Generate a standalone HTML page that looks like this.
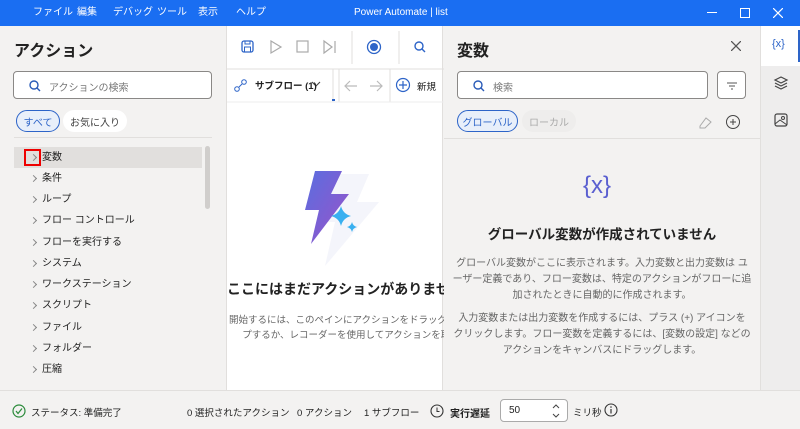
<!DOCTYPE html>
<html><head><meta charset="utf-8"><style>
*{box-sizing:border-box;margin:0;padding:0}
body{width:800px;height:429px;overflow:hidden;background:#f3f2f1;font-family:"Liberation Sans","Noto Sans CJK JP",sans-serif;color:#222;position:relative;font-size:11px}
.abs{position:absolute}
#title{left:0;top:0;width:800px;height:26px;background:#1a6ef2;color:#fff;font-size:10px}
#title span{position:absolute;top:6px;line-height:14px}
#left{left:0;top:26px;width:226px;height:364px;background:#f3f2f1}
#mid{left:226px;top:26px;width:217px;height:364px;background:#fff;border-left:1px solid #e1dfdd;border-right:1px solid #e1dfdd}
#right{left:444px;top:26px;width:316px;height:364px;background:#f3f2f1}
#rail{left:760px;top:26px;width:40px;height:364px;background:#eeeded;border-left:1px solid #e1dfdd}
#status{left:0;top:390px;width:800px;height:39px;background:#f3f2f1;border-top:1px solid #e1dfdd}
.item{position:absolute;left:14px;width:188px;height:21px;font-size:10px;line-height:21px;padding-left:28px}
.item:before{content:"";position:absolute;left:17px;top:8px;width:4px;height:4px;border-right:1px solid #888;border-top:1px solid #888;transform:rotate(45deg)}
.inp{background:#fff;border:1px solid #8a8886;border-radius:4px;position:absolute}
.pill{position:absolute;display:flex;align-items:center;justify-content:center;font-size:10px;border-radius:11px;height:22px}
</style></head><body>
<div id="title" class="abs">
<span style="left:33px">ファイル</span><span style="left:77px">編集</span><span style="left:113px">デバッグ</span><span style="left:157px">ツール</span><span style="left:198px">表示</span><span style="left:236px">ヘルプ</span>
<span style="left:354px">Power Automate | list</span>
<div class="abs" style="left:707px;top:12px;width:10px;height:1px;background:#fff"></div>
<div class="abs" style="left:740px;top:8px;width:10px;height:10px;border:1px solid #fff"></div>
<svg class="abs" style="left:773px;top:8px" width="10" height="10"><path d="M0 0L10 10M10 0L0 10" stroke="#fff" stroke-width="1.2"/></svg>
</div>

<div id="left" class="abs">
<div class="abs" style="left:14px;top:11px;font-size:16px;font-weight:bold">アクション</div>
<div class="inp" style="left:13px;top:45px;width:199px;height:28px">
<svg class="abs" style="left:15px;top:8px" width="12" height="12"><circle cx="5" cy="5" r="4" fill="none" stroke="#2a5bb8" stroke-width="1.4"/><line x1="8" y1="8" x2="11" y2="11" stroke="#2a5bb8" stroke-width="1.4"/></svg>
<span class="abs" style="left:35px;top:7px;font-size:10px;color:#777">アクションの検索</span></div>
<div class="pill" style="left:16px;top:84px;width:44px;border:1px solid #2d64c8;background:#e8effa;color:#2d64c8">すべて</div>
<div class="pill" style="left:63px;top:84px;width:64px;background:#fff;color:#444">お気に入り</div>
<div class="abs" style="left:14px;top:111px;width:198px;height:1px;background:#e1dfdd"></div>
<div class="abs" style="left:205px;top:120px;width:5px;height:63px;background:#d0cecc;border-radius:3px"></div>
<div class="item" style="top:121px;background:#e1dfdd">変数</div>
<div class="abs" style="left:24px;top:123px;width:17px;height:17px;border:2px solid #e00"></div>
<div class="item" style="top:142px">条件</div>
<div class="item" style="top:163px">ループ</div>
<div class="item" style="top:184px">フロー コントロール</div>
<div class="item" style="top:206px">フローを実行する</div>
<div class="item" style="top:227px">システム</div>
<div class="item" style="top:248px">ワークステーション</div>
<div class="item" style="top:269px">スクリプト</div>
<div class="item" style="top:291px">ファイル</div>
<div class="item" style="top:312px">フォルダー</div>
<div class="item" style="top:333px">圧縮</div>
</div>

<div id="mid" class="abs">
<svg class="abs" style="left:0;top:0" width="217" height="80">
<rect x="15" y="15" width="11" height="11" rx="2" fill="none" stroke="#2d64c8" stroke-width="1.3"/><rect x="18" y="15" width="5" height="3" fill="none" stroke="#2d64c8"/><rect x="17.5" y="21" width="6" height="5" fill="none" stroke="#2d64c8"/>
<path d="M44 15 L54 21 L44 27Z" fill="none" stroke="#aaa" stroke-width="1.2"/>
<rect x="70" y="15" width="11" height="11" fill="none" stroke="#aaa" stroke-width="1.2"/>
<path d="M97 15 L105 21 L97 27Z M108 15 V27" fill="none" stroke="#aaa" stroke-width="1.2"/>
<line x1="125" y1="5" x2="125" y2="38" stroke="#e1dfdd"/>
<circle cx="147" cy="21" r="6.5" fill="none" stroke="#2d64c8" stroke-width="1.3"/><circle cx="147" cy="21" r="4" fill="#2d64c8"/>
<line x1="172" y1="5" x2="172" y2="38" stroke="#e1dfdd"/>
<circle cx="192" cy="20" r="4" fill="none" stroke="#2d64c8" stroke-width="1.4"/><line x1="195" y1="23" x2="198" y2="26" stroke="#2d64c8" stroke-width="1.4"/>
<line x1="0" y1="43" x2="217" y2="43" stroke="#e1dfdd"/>
<circle cx="10" cy="63" r="2.3" fill="none" stroke="#2d64c8"/><circle cx="17" cy="56" r="2.3" fill="none" stroke="#2d64c8"/><line x1="12" y1="61" x2="15" y2="58" stroke="#2d64c8"/>
<path d="M85 56 L89 60 L93 56" fill="none" stroke="#444" stroke-width="1.1"/>
<line x1="106" y1="43" x2="106" y2="76" stroke="#e1dfdd"/><rect x="105" y="73" width="3" height="2" fill="#2d64c8"/>
<line x1="112" y1="43" x2="112" y2="76" stroke="#e1dfdd"/>
<path d="M118 60 H130 M123 55 L118 60 L123 65" fill="none" stroke="#bbb" stroke-width="1.2"/>
<path d="M143 60 H155 M150 55 L155 60 L150 65" fill="none" stroke="#bbb" stroke-width="1.2"/>
<line x1="163" y1="43" x2="163" y2="76" stroke="#e1dfdd"/>
<circle cx="176" cy="59" r="6.5" fill="none" stroke="#2d64c8" stroke-width="1.2"/><path d="M176 55 V63 M172 59 H180" stroke="#2d64c8" stroke-width="1.2"/>
<line x1="0" y1="76" x2="217" y2="76" stroke="#eee"/>
</svg>
<span class="abs" style="left:28px;top:52px;font-size:9.5px;font-weight:bold">サブフロー (1)</span>
<span class="abs" style="left:190px;top:53px;font-size:9.5px">新規</span>
<svg class="abs" style="left:62px;top:140px" width="100" height="110">
<defs><linearGradient id="g" x1="0" y1="0" x2="1" y2="1"><stop offset="0" stop-color="#5a6ee0"/><stop offset="1" stop-color="#9b52c8"/></linearGradient></defs>
<path d="M42 8 L80 8 L68 36 L90 36 L36 100 L46 56 L28 56 Z" fill="#f4f5fb"/>
<path d="M26 5 L53 5 L42 28 L60 28 L22 78 L30 44 L16 44 Z" fill="url(#g)"/>
<path d="M52 40 Q54 48 62 50 Q54 52 52 60 Q50 52 42 50 Q50 48 52 40Z" fill="#39b0f0"/>
<path d="M63 56 Q64 60 68 61 Q64 62 63 66 Q62 62 58 61 Q62 60 63 56Z" fill="#39b0f0"/>
</svg>
<div class="abs" style="left:0;top:253px;width:230px;font-size:14px;font-weight:bold;white-space:nowrap">ここにはまだアクションがありません</div>
<div class="abs" style="left:2px;top:287px;width:220px;font-size:9.5px;color:#666;white-space:nowrap;line-height:15px">開始するには、このペインにアクションをドラッグ ア<br>&nbsp;&nbsp;&nbsp;&nbsp;&nbsp;プするか、レコーダーを使用してアクションを取彳</div>
</div>

<div id="right" class="abs">
<div class="abs" style="left:13px;top:11px;font-size:16px;font-weight:bold">変数</div>
<svg class="abs" style="left:287px;top:15px" width="10" height="10"><path d="M0 0L10 10M10 0L0 10" stroke="#555" stroke-width="1.3"/></svg>
<div class="inp" style="left:13px;top:45px;width:251px;height:28px">
<svg class="abs" style="left:15px;top:8px" width="12" height="12"><circle cx="5" cy="5" r="4" fill="none" stroke="#2a5bb8" stroke-width="1.4"/><line x1="8" y1="8" x2="11" y2="11" stroke="#2a5bb8" stroke-width="1.4"/></svg>
<span class="abs" style="left:35px;top:7px;font-size:10px;color:#777">検索</span></div>
<div class="inp" style="left:273px;top:45px;width:29px;height:28px"><svg class="abs" style="left:8px;top:9px" width="12" height="10"><path d="M1 2H11M3 5H9M5 8H7" stroke="#555"/></svg></div>
<div class="pill" style="left:13px;top:84px;width:61px;border:1px solid #2d64c8;background:#e8effa;color:#2d64c8">グローバル</div>
<div class="pill" style="left:78px;top:84px;width:54px;background:#eeedec;color:#aaa">ローカル</div>
<svg class="abs" style="left:250px;top:88px" width="50" height="16"><path d="M6 12 L12 4 L17 8 L11 14 H6Z" fill="none" stroke="#aaa"/><circle cx="39" cy="8" r="6.5" fill="none" stroke="#444"/><path d="M39 5V11M36 8H42" stroke="#444"/></svg>
<div class="abs" style="left:0;top:112px;width:316px;height:1px;background:#e1dfdd"></div>
<div class="abs" style="left:139px;top:146px;font-size:24px;color:#5a5fd0;font-family:'Liberation Sans',sans-serif">{x}</div>
<div class="abs" style="left:0;top:197px;width:316px;text-align:center;font-size:13.5px;font-weight:bold">グローバル変数が作成されていません</div>
<div class="abs" style="left:8px;top:230px;width:300px;text-align:center;font-size:10px;color:#666;line-height:16px">グローバル変数がここに表示されます。入力変数と出力変数は ユーザー定義であり、フロー変数は、特定のアクションがフローに追 加されたときに自動的に作成されます。</div>
<div class="abs" style="left:8px;top:285px;width:300px;text-align:center;font-size:10px;color:#666;line-height:16px">入力変数または出力変数を作成するには、プラス (+) アイコンを クリックします。フロー変数を定義するには、[変数の設定] などの アクションをキャンバスにドラッグします。</div>
</div>

<div id="rail" class="abs">
<div class="abs" style="left:0;top:0;width:40px;height:40px;background:#fff"></div>
<div class="abs" style="left:37px;top:4px;width:3px;height:32px;background:#2d64c8"></div>
<span class="abs" style="left:11px;top:12px;font-size:11px;color:#2d64c8">{x}</span>
<svg class="abs" style="left:12px;top:49px" width="16" height="16"><path d="M8 2 L14 5 L8 8 L2 5Z M2 8 L8 11 L14 8 M2 11 L8 14 L14 11" fill="none" stroke="#444" stroke-width="1.2"/></svg>
<svg class="abs" style="left:12px;top:86px" width="16" height="16"><rect x="2" y="2" width="12" height="12" rx="2" fill="none" stroke="#444" stroke-width="1.2"/><path d="M2 12 L7 8 L14 13" fill="none" stroke="#444"/><circle cx="10" cy="6" r="1.5" fill="none" stroke="#444"/></svg>
</div>

<div id="status" class="abs">
<svg class="abs" style="left:12px;top:13px" width="14" height="14"><circle cx="7" cy="7" r="6" fill="none" stroke="#2a8a3a" stroke-width="1.2"/><path d="M4 7 L6 9.5 L10 4.5" fill="none" stroke="#2a8a3a" stroke-width="1.2"/></svg>
<span class="abs" style="left:31px;top:14px;font-size:9.5px">ステータス: 準備完了</span>
<span class="abs" style="left:187px;top:14px;font-size:9.5px">0 選択されたアクション</span>
<span class="abs" style="left:297px;top:14px;font-size:9.5px">0 アクション</span>
<span class="abs" style="left:364px;top:14px;font-size:9.5px">1 サブフロー</span>
<svg class="abs" style="left:430px;top:13px" width="14" height="14"><circle cx="7" cy="7" r="6" fill="none" stroke="#333" stroke-width="1.1"/><path d="M7 3.5V7.5H9.5" fill="none" stroke="#333"/></svg>
<span class="abs" style="left:450px;top:14px;font-size:10px;font-weight:bold">実行遅延</span>
<div class="inp" style="left:500px;top:8px;width:68px;height:23px;border-color:#aaa"><span class="abs" style="left:8px;top:5px;font-size:10px">50</span>
<svg class="abs" style="left:51px;top:3px" width="8" height="16"><path d="M1 5 L4 2 L7 5 M1 11 L4 14 L7 11" fill="none" stroke="#444"/></svg></div>
<span class="abs" style="left:573px;top:14px;font-size:9.5px">ミリ秒</span>
<svg class="abs" style="left:604px;top:12px" width="14" height="14"><circle cx="7" cy="7" r="6" fill="none" stroke="#333" stroke-width="1.1"/><path d="M7 6V10.5" stroke="#333" stroke-width="1.2"/><circle cx="7" cy="4" r=".8" fill="#333"/></svg>
</div>
</body></html>
